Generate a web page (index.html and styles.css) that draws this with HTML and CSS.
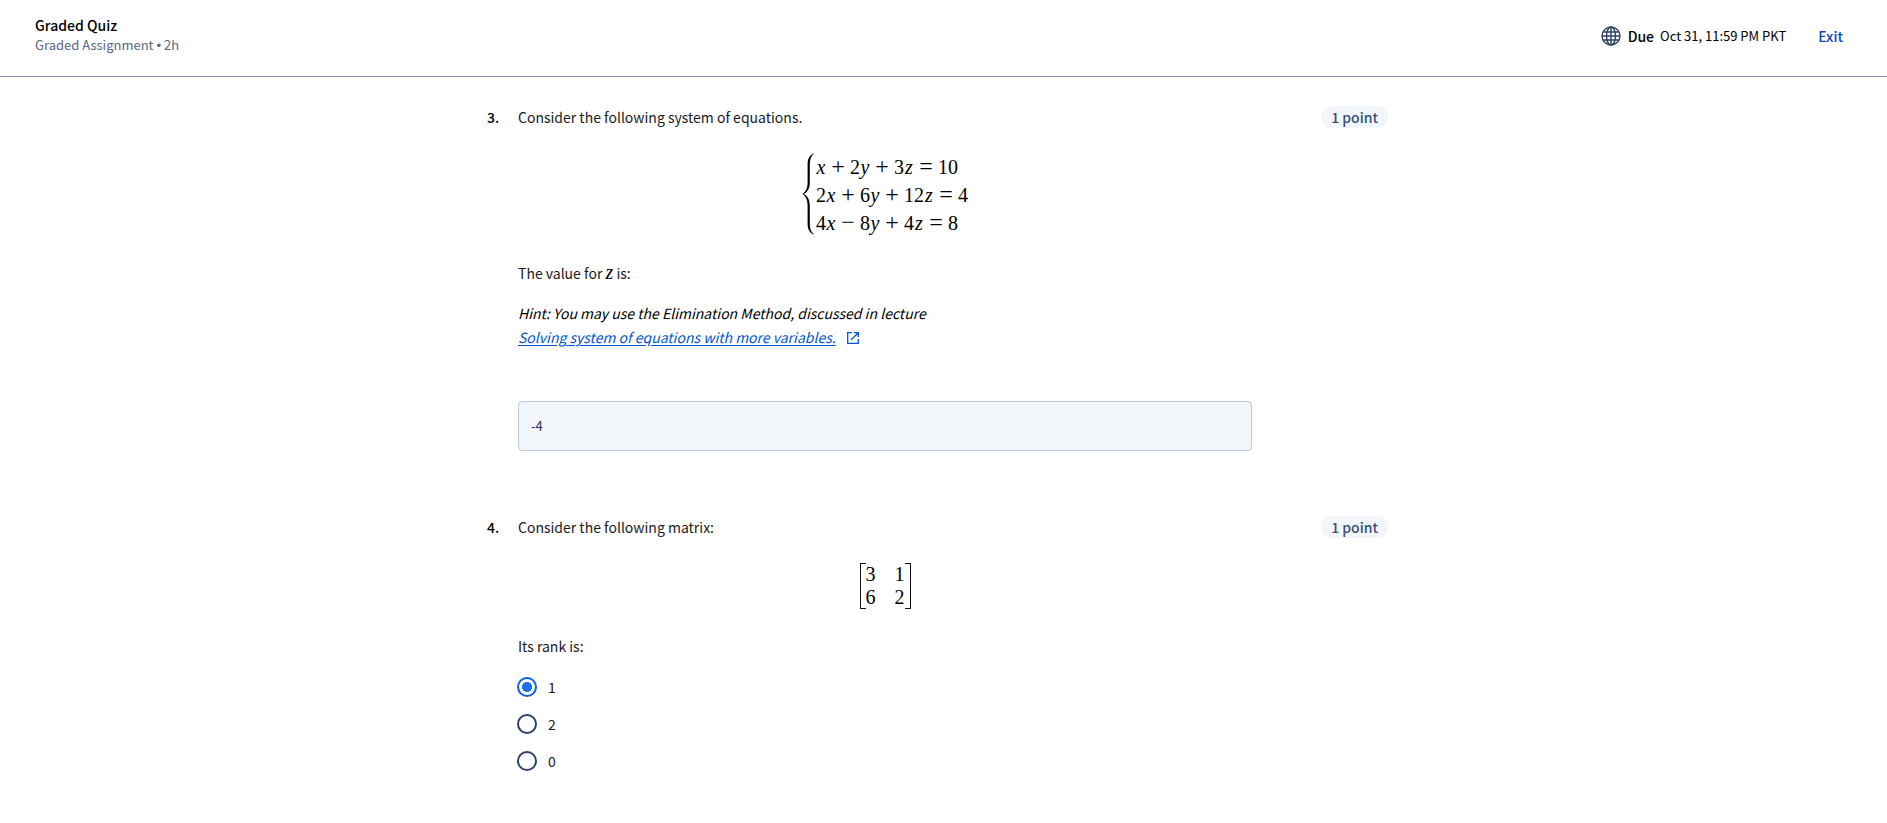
FILE: index.html
```html
<!DOCTYPE html>
<html lang="en">
<head>
<meta charset="utf-8">
<title>Graded Quiz</title>
<link rel="stylesheet" href="styles.css">
</head>
<body>
<header class="topbar">
  <div class="heading">
    <h1 class="title">Graded Quiz</h1>
    <p class="subtitle">Graded Assignment <span class="bullet">•</span> 2h</p>
  </div>
  <div class="status">
    <svg class="globe" viewBox="0 0 20 20" aria-hidden="true"><circle cx="10" cy="10" r="9"/><ellipse cx="10" cy="10" rx="4.500" ry="9"/><path d="M10 1v18M1 10h18M2.500 6h15M2.500 14h15"/></svg>
    <strong class="due">Due</strong>
    <span class="date">Oct 31, 11:59 PM PKT</span>
    <button class="exit" type="button">Exit</button>
  </div>
</header>
<main class="quiz">
  <section class="question">
    <span class="number">3.</span>
    <div class="content">
      <p id="q3">Consider the following system of equations.</p>
      <div class="math system">
        <svg class="brace" viewBox="0 0 12 82" aria-hidden="true"><path d="M11.600.3C7.200 2.600 5.600 6 5.600 12v17c0 6-1.500 9.300-5 12 3.500 2.700 5 6 5 12v17c0 6 1.600 9.400 6 11.700v-.8C8.700 78.500 7.800 75 7.800 70V53c0-6-1.800-9.500-5.800-12 4-2.500 5.800-6 5.800-12V12c0-5 .9-8.500 3.800-10.900z"/></svg>
        <div class="rows">
          <div class="row"><i>x</i><b>+</b>2<i>y</i><b>+</b>3<i>z</i><b>=</b>10</div>
          <div class="row">2<i>x</i><b>+</b>6<i>y</i><b>+</b>12<i>z</i><b>=</b>4</div>
          <div class="row">4<i>x</i><b>−</b>8<i>y</i><b>+</b>4<i>z</i><b>=</b>8</div>
        </div>
      </div>
      <p>The value for <span class="variable">z</span> is:</p>
      <p class="hint">Hint: You may use the Elimination Method, discussed in lecture<br><a href="#lecture">Solving system of equations with more variables.</a><svg class="external" viewBox="0 0 12 12" aria-hidden="true"><path d="M5 .7H.7v10.600h10.600V7M7 .7h4.300V5M11.300.7L4 8"/></svg></p>
      <input class="answer" type="text" value="-4" aria-labelledby="q3">
    </div>
    <span class="points">1 point</span>
  </section>
  <section class="question">
    <span class="number">4.</span>
    <div class="content">
      <p id="q4">Consider the following matrix:</p>
      <div class="math matrix"><span>3</span><span>1</span><span>6</span><span>2</span></div>
      <p>Its rank is:</p>
      <div class="options" role="radiogroup" aria-labelledby="q4">
        <label class="option"><input type="radio" name="rank" checked>1</label>
        <label class="option"><input type="radio" name="rank">2</label>
        <label class="option"><input type="radio" name="rank">0</label>
      </div>
    </div>
    <span class="points">1 point</span>
  </section>
</main>
</body>
</html>
```
FILE: styles.css
```css
* { box-sizing: border-box; }
body {
  margin: 0;
  background: #fff;
  color: #1a1a1a;
  font: 14px/24px "Noto Sans CJK SC", "Open Sans", sans-serif;
}
p, h1 { margin: 0; }
.topbar {
  display: flex;
  justify-content: space-between;
  align-items: flex-start;
  padding: 15px 44px 20px 35px;
  border-bottom: 1px solid #8495b0;
}
.title { color: #000; font-size: 14px; line-height: 20px; font-weight: 500; }
.subtitle { color: #5b6780; font-size: 13px; line-height: 20px; }
.bullet { font-family: "Liberation Sans", sans-serif; }
.status { display: flex; align-items: center; height: 42px; margin-bottom: -2px; color: #000; }
.globe { width: 20px; height: 20px; margin-right: 7px; fill: none; stroke: #2d4164; stroke-width: 1.4; }
.due { margin-right: 6px; font-weight: 500; }
.date { margin-right: 32px; font-size: 13px; }
.exit { padding: 0; border: 0; background: none; color: #0c45c5; font: inherit; font-weight: 500; }
.quiz { width: 100%; max-width: 913px; margin: 0 auto; padding: 28px 12px 24px 0; }
.question { display: flex; align-items: flex-start; margin-bottom: 64px; }
.number { flex: none; width: 31px; color: #000; font-weight: 500; }
.content { flex: none; width: calc(100% - 167px); }
.points {
  margin: 1px 0 0 auto;
  padding: 0 10px;
  border-radius: 11px;
  background: #f2f5fa;
  color: #3a5072;
  font-weight: 500;
  line-height: 22px;
}
.math { color: #000; font-family: "Liberation Serif", serif; font-size: 20px; }
.system { display: flex; justify-content: center; margin: 24px 0; }
.brace { width: 12px; height: 82px; margin-right: 2px; }
.row { line-height: 28px; height: 28px; white-space: nowrap; }
.row i { display: inline-block; min-width: 10px; text-align: center; }
.row b { display: inline-block; width: 24px; text-align: center; font-size: 24px; line-height: 20px; font-weight: 400; }
.variable { color: #000; font: italic 20px/20px "Liberation Serif", serif; }
.hint { margin-top: 16px; color: #000; font-style: italic; }
.hint a { color: #0056d2; text-underline-offset: 2px; }
.external { width: 12px; height: 12px; margin-left: 11px; vertical-align: -1px; fill: none; stroke: #0056d2; stroke-width: 1.3; }
.answer {
  display: block;
  width: 100%;
  height: 50px;
  margin-top: 52px;
  padding: 0 12px 2px;
  border: 1px solid #bac7de;
  border-radius: 4px;
  background: #f2f5fa;
  color: #382d6b;
  font: inherit;
  font-size: 13px;
}
.matrix {
  display: grid;
  grid-template-columns: 10px 10px;
  column-gap: 19px;
  width: 51px;
  margin: 24px auto 25px;
  padding: 0 5px;
  line-height: 23px;
  background:
    linear-gradient(#111, #111) 0 0 / 5px 1px,
    linear-gradient(#111, #111) 0 100% / 5px 1px,
    linear-gradient(#111, #111) 100% 0 / 5px 1px,
    linear-gradient(#111, #111) 100% 100% / 5px 1px;
  background-repeat: no-repeat;
  border: solid #111;
  border-width: 0 1px;
}
.options { display: grid; gap: 13px; margin-top: 17px; }
.option { display: flex; align-items: center; gap: 11px; width: max-content; }
.option input {
  appearance: none;
  width: 20px;
  height: 20px;
  margin: 0 0 0 -1px;
  border: 2px solid #2d4164;
  border-radius: 50%;
}
.option input:checked {
  border-color: #0f5fe5;
  background: radial-gradient(circle, #1a70ee 0 5px, transparent 5px);
}
```
